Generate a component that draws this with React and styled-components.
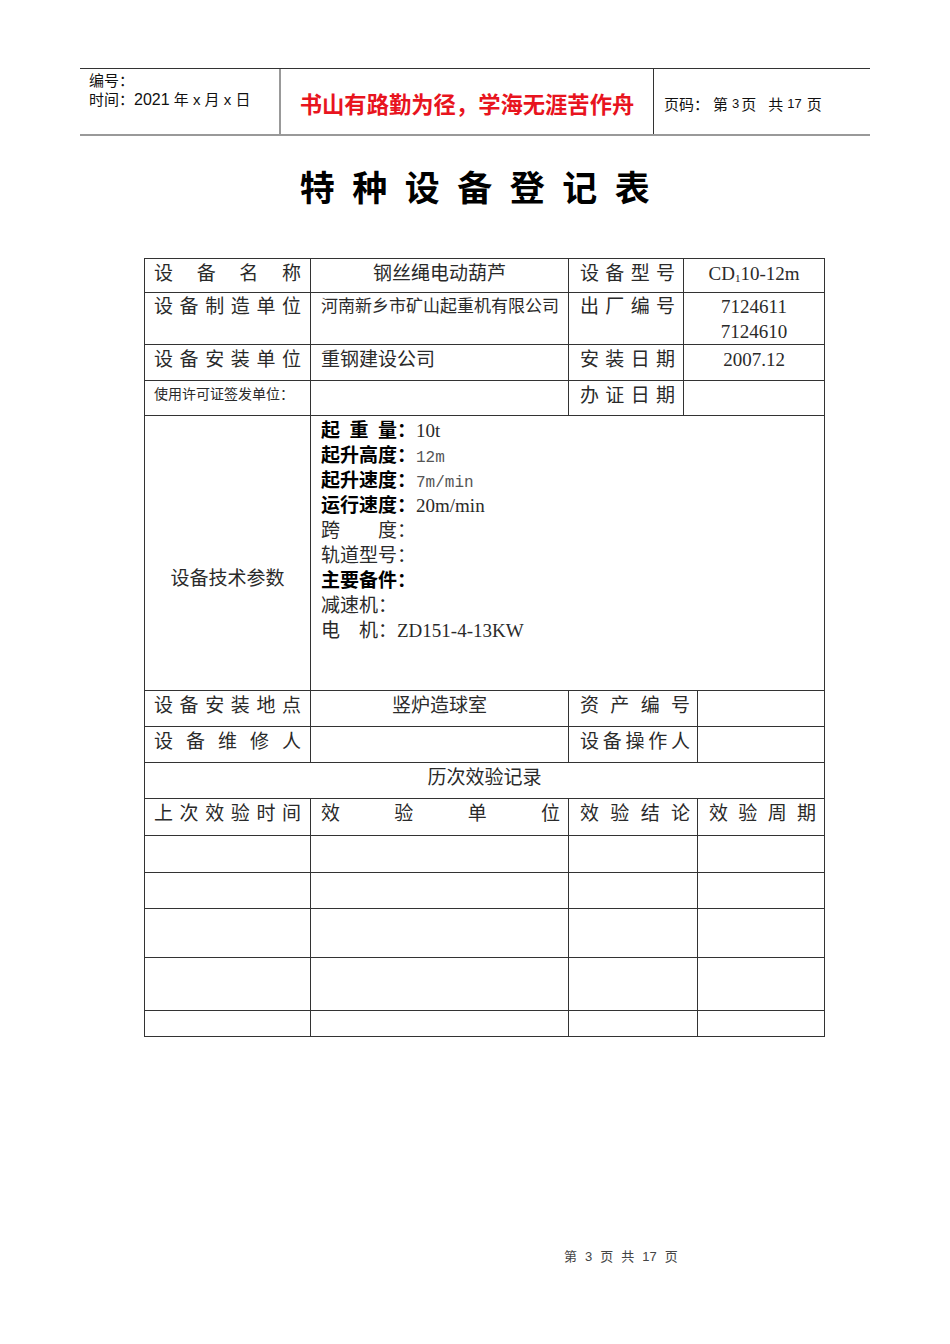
import React from 'react';
import styled, { createGlobalStyle } from 'styled-components';

const Global = createGlobalStyle`
  html, body { margin: 0; padding: 0; background: #fff; }
  body {
    font-family: "Liberation Serif", "Noto Sans CJK SC", serif;
    color: #222;
  }
`;

const Page = styled.div`
  width: 950px;
  min-height: 1344px;
  padding-top: 68px;
  box-sizing: border-box;
  display: flex;
  flex-direction: column;
`;

const Header = styled.header`
  margin-left: 80px;
  width: 790px;
  height: 68px;
  box-sizing: border-box;
  display: flex;
  border-top: 1px solid #333;
  border-bottom: 2px solid #999;
  font-family: "Liberation Sans", "Noto Sans CJK SC", sans-serif;
  color: #111;
`;

const HeadLeft = styled.div`
  width: 201px;
  box-sizing: border-box;
  padding: 2px 0 0 9px;
  font-size: 15px;
  line-height: 19px;
  border-right: 2px solid #999;
`;

const DateNum = styled.span`
  font-size: 16px;
`;

const HeadMid = styled.div`
  width: 373px;
  box-sizing: border-box;
  display: flex;
  align-items: center;
  justify-content: center;
  padding-top: 3px;
  font-family: "Noto Sans CJK SC", sans-serif;
  font-weight: 700;
  font-size: 22.3px;
  color: #e8141e;
  border-right: 1px solid #333;
`;

const HeadRight = styled.div`
  flex: 1;
  display: flex;
  align-items: center;
  padding: 3px 0 0 10px;
  font-size: 15px;
  white-space: pre;
`;

const Piece = styled.span`
  margin-left: ${p => p.$ml || 0}px;
  font-size: ${p => p.$fs || 15}px;
`;

const Title = styled.h1`
  margin: 29px 0 0;
  padding-left: 17px;
  text-align: center;
  font-family: "Noto Sans CJK SC", sans-serif;
  font-weight: 700;
  font-size: 35px;
  line-height: 42px;
  letter-spacing: 17.5px;
  color: #000;
`;

const Table = styled.table`
  margin: 51px 0 0 144px;
  width: 680px;
  border-collapse: collapse;
  table-layout: fixed;
  border: 1.5px solid #555;
`;

const Row = styled.tr`
  height: ${p => p.$h}px;
`;

const Cell = styled.td`
  border: 1px solid #333;
  vertical-align: top;
  box-sizing: border-box;
  padding: ${p => (p.$pt ?? 3)}px ${p => p.$pr ?? 9}px 0 ${p => p.$pl ?? 9}px;
  text-align: ${p => p.$align || 'left'};
  font-size: ${p => p.$fs || 19}px;
  line-height: 25px;
  color: #2a2a2a;
  overflow: hidden;
  white-space: nowrap;
`;

const SpreadBox = styled.span`
  display: ${p => (p.$w ? 'inline-flex' : 'flex')};
  width: ${p => (p.$w ? `${p.$w}px` : '100%')};
  justify-content: space-between;
  vertical-align: top;
`;

function Spread({ text, w }) {
  return (
    <SpreadBox $w={w}>
      {[...text].map((c, i) => (
        <span key={i}>{c}</span>
      ))}
    </SpreadBox>
  );
}

const ParamLine = styled.div`
  height: 25px;
  line-height: 25px;
  white-space: pre;
`;

const Bold = styled.span`
  font-weight: 700;
  color: #000;
`;

const Mono = styled.span`
  font-family: "Liberation Mono", monospace;
  font-size: 16px;
  line-height: 0;
  color: #555;
`;

const Sub = styled.sub`
  font-size: 11px;
  vertical-align: -2px;
  line-height: 0;
`;

const Footer = styled.footer`
  margin: 211px 0 0 564px;
  display: flex;
  gap: 8px;
  font-family: "Liberation Sans", "Noto Sans CJK SC", sans-serif;
  font-size: 13px;
  line-height: 18px;
  color: #444;
`;

const emptyRows = [37, 36, 49, 53, 26];

export default function App() {
  return (
    <>
      <Global />
      <Page>
        <Header>
          <HeadLeft>
            <div>编号：</div>
            <div>时间：<DateNum>2021</DateNum> 年 x 月 x 日</div>
          </HeadLeft>
          <HeadMid>书山有路勤为径，学海无涯苦作舟</HeadMid>
          <HeadRight>
            <Piece>页码：</Piece>
            <Piece $ml={4}>第</Piece>
            <Piece $ml={4} $fs={13}>3</Piece>
            <Piece $ml={2}>页</Piece>
            <Piece $ml={12}>共</Piece>
            <Piece $ml={4} $fs={13}>17</Piece>
            <Piece $ml={5}>页</Piece>
          </HeadRight>
        </Header>

        <Title>特种设备登记表</Title>

        <Table>
          <colgroup>
            <col style={{ width: 166 }} />
            <col style={{ width: 258 }} />
            <col style={{ width: 115 }} />
            <col style={{ width: 14 }} />
            <col style={{ width: 127 }} />
          </colgroup>
          <tbody>
            <Row $h={34}>
              <Cell $pt={2}><Spread text="设备名称" /></Cell>
              <Cell $pt={2} $align="center">钢丝绳电动葫芦</Cell>
              <Cell $pt={2} $pl={11} $pr={8}><Spread text="设备型号" /></Cell>
              <Cell $pt={2} colSpan={2} $align="center">CD<Sub>1</Sub>10-12m</Cell>
            </Row>
            <Row $h={52}>
              <Cell $pt={1}><Spread text="设备制造单位" /></Cell>
              <Cell $pt={1} $fs={17} $pl={10}>河南新乡市矿山起重机有限公司</Cell>
              <Cell $pt={1} $pl={11} $pr={8}><Spread text="出厂编号" /></Cell>
              <Cell $pt={1} colSpan={2} $align="center">7124611<br />7124610</Cell>
            </Row>
            <Row $h={36}>
              <Cell $pt={2}><Spread text="设备安装单位" /></Cell>
              <Cell $pt={2} $pl={10}>重钢建设公司</Cell>
              <Cell $pt={2} $pl={11} $pr={8}><Spread text="安装日期" /></Cell>
              <Cell $pt={2} colSpan={2} $align="center">2007.12</Cell>
            </Row>
            <Row $h={35}>
              <Cell $fs={14} $pt={1}>使用许可证签发单位：</Cell>
              <Cell />
              <Cell $pt={2} $pl={11} $pr={8}><Spread text="办证日期" /></Cell>
              <Cell colSpan={2} />
            </Row>
            <Row $h={275}>
              <Cell $align="center" $pt={150}>设备技术参数</Cell>
              <Cell colSpan={4} $pl={10} $pt={2}>
                <ParamLine><Bold><Spread text="起重量" w={76} />：</Bold>10t</ParamLine>
                <ParamLine><Bold>起升高度：</Bold><Mono>12m</Mono></ParamLine>
                <ParamLine><Bold>起升速度：</Bold><Mono>7m/min</Mono></ParamLine>
                <ParamLine><Bold>运行速度：</Bold>20m/min</ParamLine>
                <ParamLine>跨　　度：</ParamLine>
                <ParamLine>轨道型号：</ParamLine>
                <ParamLine><Bold>主要备件：</Bold></ParamLine>
                <ParamLine>减速机：</ParamLine>
                <ParamLine>电　机：ZD151-4-13KW</ParamLine>
              </Cell>
            </Row>
            <Row $h={36}>
              <Cell $pt={2}><Spread text="设备安装地点" /></Cell>
              <Cell $pt={2} $align="center">竖炉造球室</Cell>
              <Cell $pt={2} colSpan={2} $pl={11} $pr={7}><Spread text="资产编号" /></Cell>
              <Cell />
            </Row>
            <Row $h={36}>
              <Cell $pt={2}><Spread text="设备维修人" /></Cell>
              <Cell />
              <Cell $pt={2} colSpan={2} $pl={11} $pr={7}><Spread text="设备操作人" /></Cell>
              <Cell />
            </Row>
            <Row $h={36}>
              <Cell $pt={2} colSpan={5} $align="center">历次效验记录</Cell>
            </Row>
            <Row $h={37}>
              <Cell $pt={2}><Spread text="上次效验时间" /></Cell>
              <Cell $pt={2} $pl={10} $pr={8}><Spread text="效验单位" /></Cell>
              <Cell $pt={2} colSpan={2} $pl={11} $pr={7}><Spread text="效验结论" /></Cell>
              <Cell $pt={2} $pl={11} $pr={8}><Spread text="效验周期" /></Cell>
            </Row>
            {emptyRows.map((h, i) => (
              <Row key={i} $h={h}>
                <Cell />
                <Cell />
                <Cell colSpan={2} />
                <Cell />
              </Row>
            ))}
          </tbody>
        </Table>

        <Footer>
          <span>第</span>
          <span>3</span>
          <span>页</span>
          <span>共</span>
          <span>17</span>
          <span>页</span>
        </Footer>
      </Page>
    </>
  );
}
